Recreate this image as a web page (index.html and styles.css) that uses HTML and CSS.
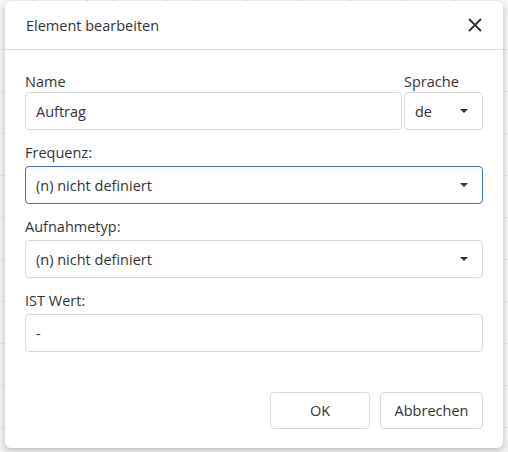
FILE: index.html
```html
<!DOCTYPE html>
<html lang="de">
<head>
<meta charset="utf-8">
<link rel="stylesheet" href="styles.css">
</head>
<body>
<div class="backdrop">
  <div class="bg-head">
    <span class="col c1"></span><span class="col c2"></span><span class="col c3"></span><span class="col c4"></span><span class="col c5"></span><span class="col c6"></span><span class="col c7"></span><span class="col c8"></span><span class="col c9"></span><span class="col c10"></span>
  </div>
  <div class="bg-rows">
    <div class="bg-row"></div><div class="bg-row"></div><div class="bg-row"></div><div class="bg-row"></div><div class="bg-row"></div><div class="bg-row"></div><div class="bg-row"></div><div class="bg-row"></div><div class="bg-row"></div><div class="bg-row"></div>
  </div>
  <div class="bg-foot">
    <span class="tri"></span><span class="tri"></span><span class="tri"></span>
  </div>
</div>

<div class="modal">
  <div class="modal-header">
    <span class="modal-title">Element bearbeiten</span>
    <button class="close" aria-label="Schließen">
      <svg width="14" height="14" viewBox="0 0 14 14"><path d="M1 1 L13 13 M13 1 L1 13" stroke="#333" stroke-width="1.8" fill="none"/></svg>
    </button>
  </div>
  <div class="modal-body">
    <div class="row">
      <div class="group grow">
        <label class="label">Name</label>
        <div class="field">Auftrag</div>
      </div>
      <div class="group lang">
        <label class="label">Sprache</label>
        <div class="field select">de<span class="caret"></span></div>
      </div>
    </div>
    <div class="group">
      <label class="label">Frequenz:</label>
      <div class="field select focused">(n) nicht definiert<span class="caret"></span></div>
    </div>
    <div class="group">
      <label class="label">Aufnahmetyp:</label>
      <div class="field select">(n) nicht definiert<span class="caret"></span></div>
    </div>
    <div class="group">
      <label class="label">IST Wert:</label>
      <div class="field">-</div>
    </div>
  </div>
  <div class="modal-footer">
    <button class="btn ok">OK</button>
    <button class="btn cancel">Abbrechen</button>
  </div>
</div>
</body>
</html>
```
FILE: styles.css
```css
* { box-sizing: border-box; }
html, body { margin: 0; padding: 0; }
body {
  width: 508px;
  height: 452px;
  overflow: hidden;
  background: #f0f0f0;
  font-family: "Open Sans", "Noto Sans", sans-serif;
  color: #333;
  position: relative;
}
.backdrop {
  height: 452px;
  display: flex;
  flex-direction: column;
  background: #f0f0f0;
}
.bg-head {
  height: 8px;
  display: flex;
  background: #f7f7f7;
}
.col {
  border-right: 1px solid #cfcfcf;
  width: 52px;
}
.col.c1 { width: 34px; }
.col.c2 { width: 54px; }
.col.c3 { width: 26px; }
.col.c4 { width: 53px; }
.col.c5 { width: 28px; }
.col.c6 { width: 52px; }
.bg-rows { flex: 1; background: #f2f2f2; }
.bg-row { height: 42px; border-bottom: 1px solid #e4e4e4; }
.bg-foot {
  height: 10px;
  display: flex;
  gap: 150px;
  padding-left: 102px;
}
.tri {
  width: 0; height: 0;
  border-left: 5px solid transparent;
  border-right: 5px solid transparent;
  border-top: 4px solid #a0a0a0;
}

.modal {
  position: absolute;
  left: 5px;
  top: 1px;
  width: 498px;
  height: 447px;
  background: #fff;
  border-radius: 6px;
  box-shadow: 0 2px 6px rgba(0,0,0,0.22);
  display: flex;
  flex-direction: column;
}
.modal-header {
  height: 49px;
  border-bottom: 1px solid #dedede;
  display: flex;
  align-items: center;
  justify-content: space-between;
  padding: 0 21px 0 21px;
}
.modal-title {
  font-size: 14.5px;
  color: #333;
  padding-top: 1px;
}
.close {
  border: 0;
  background: none;
  padding: 0;
  width: 14px;
  height: 14px;
  display: flex;
}
.modal-body {
  padding: 22px 20px 0 20px;
  display: flex;
  flex-direction: column;
  gap: 13px;
  flex: 1;
}
.row { display: flex; gap: 2px; }
.group { display: flex; flex-direction: column; }
.grow { flex: 1; }
.lang { width: 79px; }
.label {
  font-size: 14.5px;
  line-height: 20px;
  color: #333;
  margin-bottom: 3px;
}
.row .label { margin-bottom: 0; }
.field {
  height: 38px;
  border: 1px solid #d9d9d9;
  border-radius: 4px;
  padding: 0 10px;
  display: flex;
  align-items: center;
  font-size: 14.5px;
  color: #333;
}
.select { justify-content: space-between; }
.focused { border-color: #3b70c4; }
.caret {
  width: 0; height: 0;
  border-left: 4px solid transparent;
  border-right: 4px solid transparent;
  border-top: 4px solid #333;
  margin-right: 4px;
}
.modal-footer {
  display: flex;
  justify-content: flex-end;
  gap: 10px;
  padding: 0 20px 19px 20px;
}
.btn {
  height: 37px;
  background: #fff;
  border: 1px solid #d9d9d9;
  border-radius: 4px;
  font-family: "Open Sans", "Noto Sans", sans-serif;
  font-size: 14.5px;
  color: #333;
}
.ok { width: 100px; }
.cancel { width: 103px; }
```
